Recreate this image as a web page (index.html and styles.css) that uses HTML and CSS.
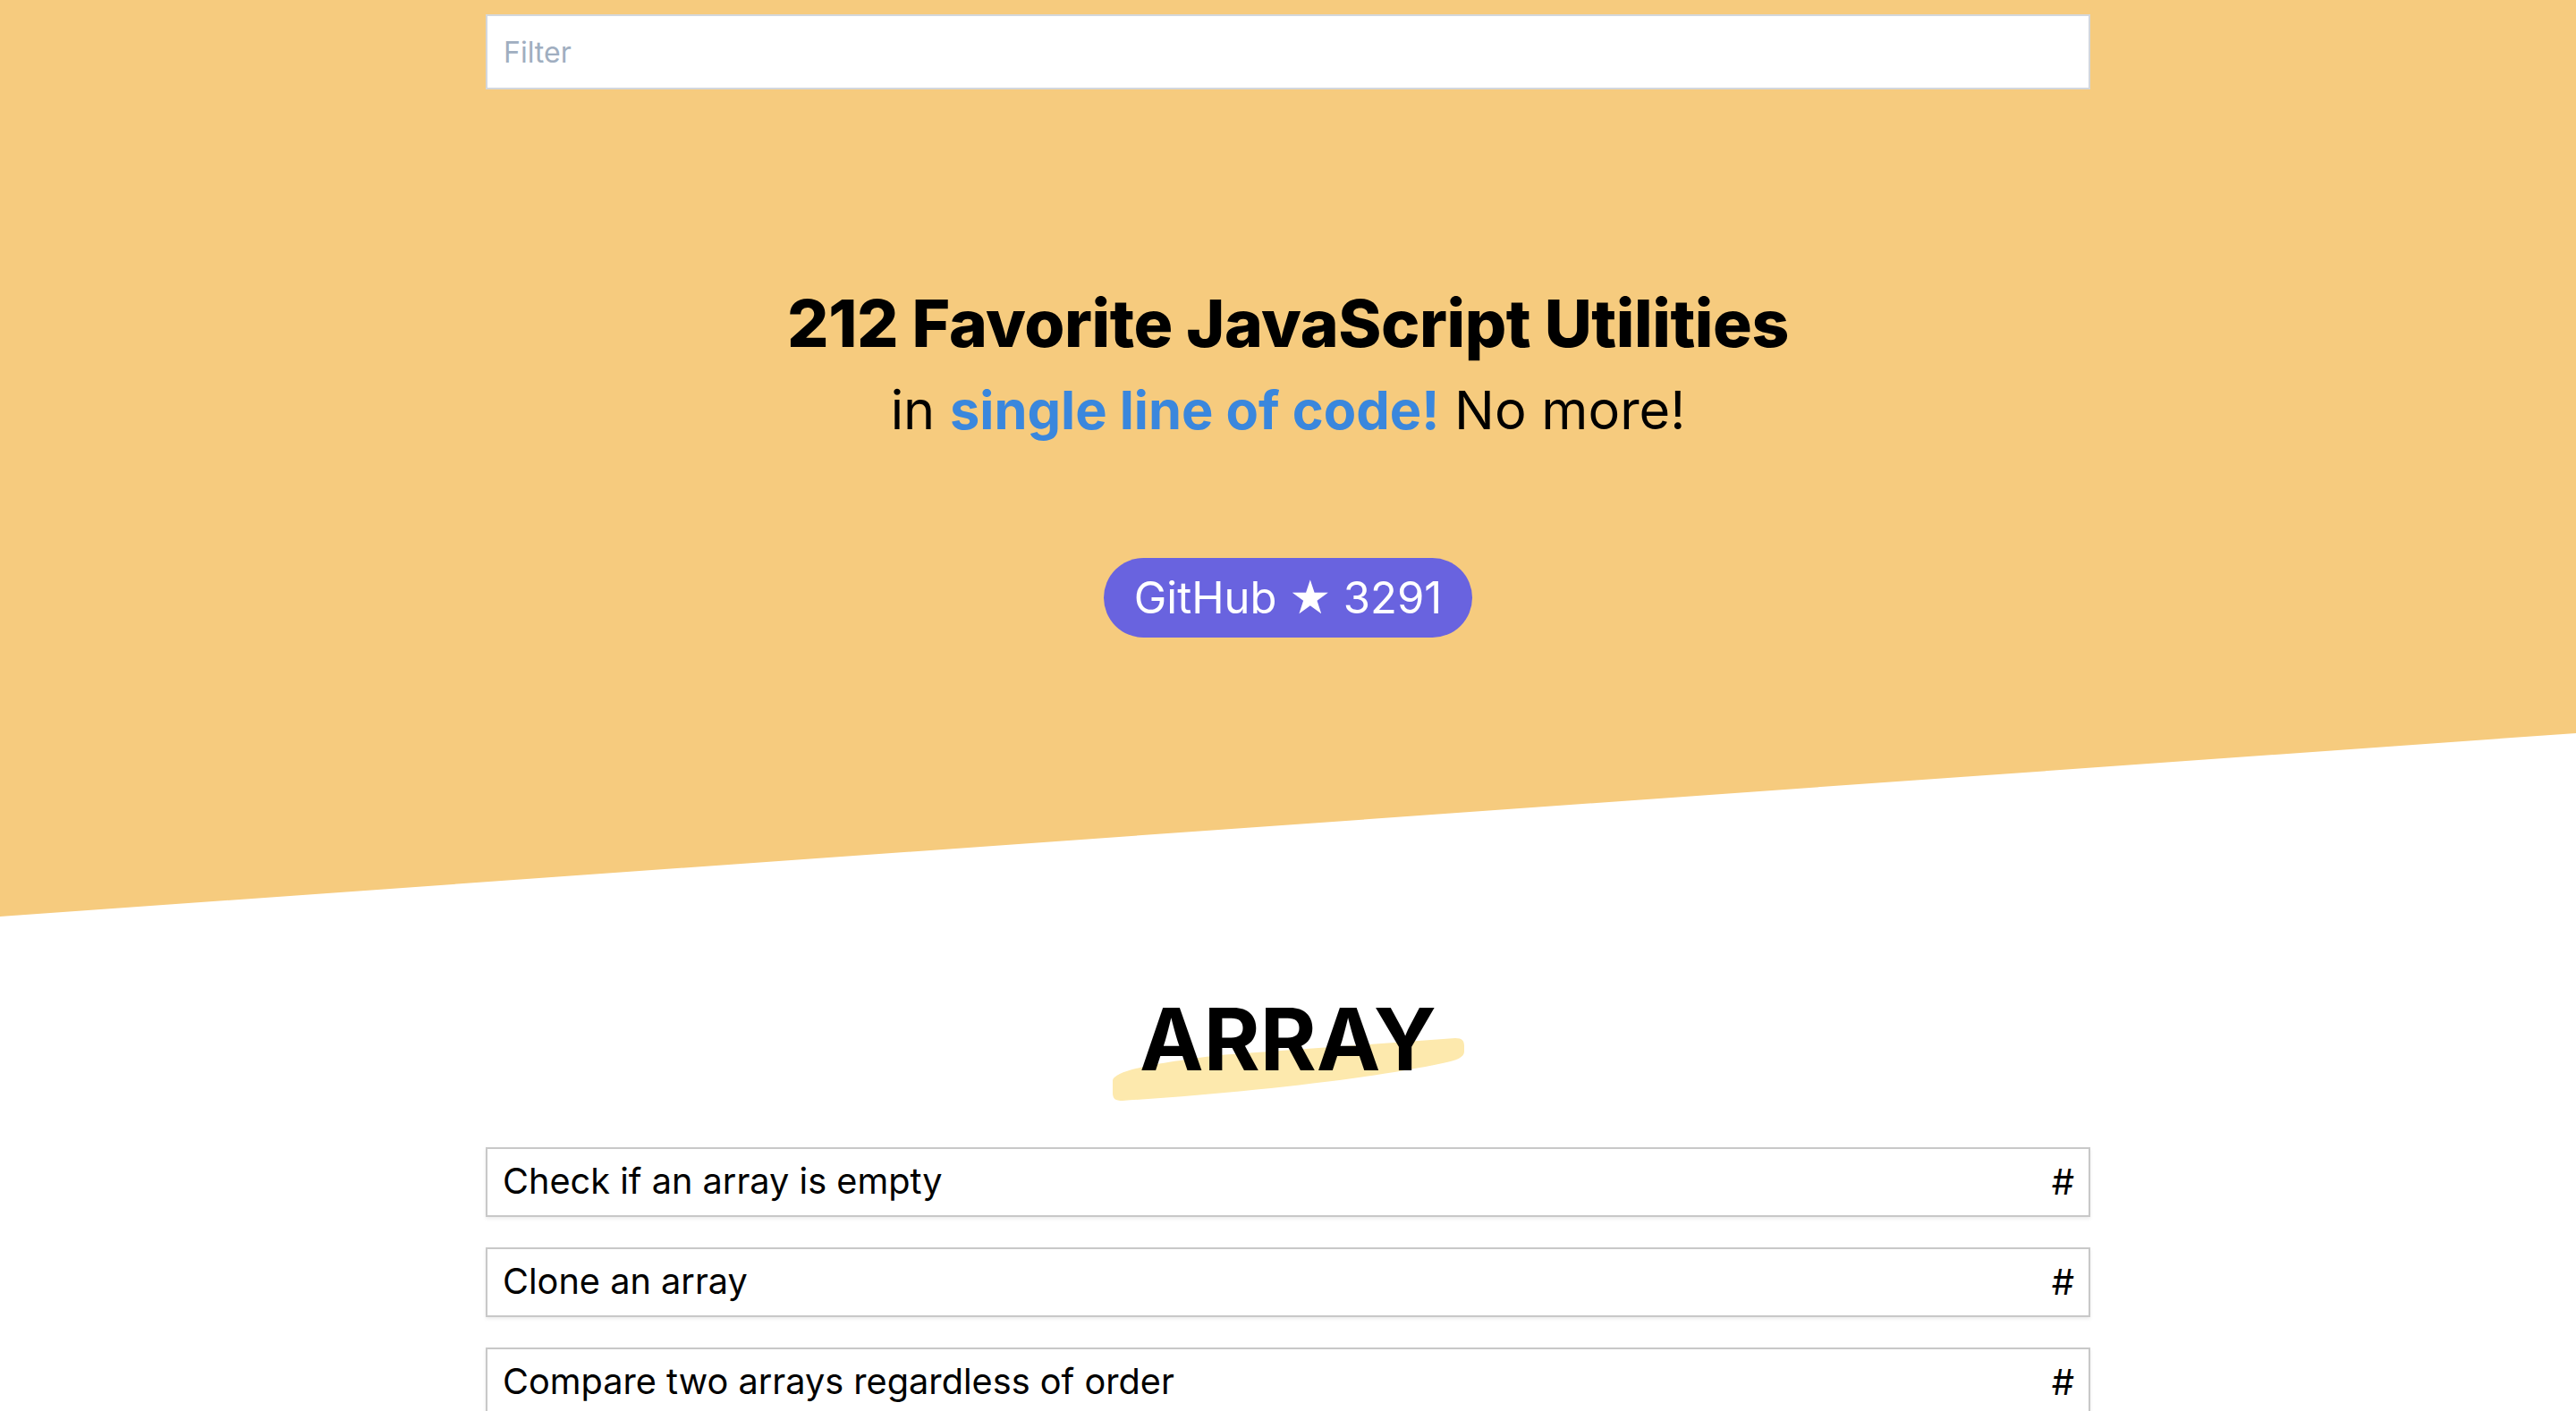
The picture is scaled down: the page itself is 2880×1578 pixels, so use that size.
FILE: index.html
```html
<!DOCTYPE html>
<html lang="en">
<head>
<meta charset="utf-8">
<title>1 LOC</title>
<link rel="stylesheet" href="styles.css">
</head>
<body>
<header class="hero">
  <div class="container">
    <input class="filter" type="text" placeholder="Filter">
  </div>
  <h1 class="hero-title">212 Favorite JavaScript Utilities</h1>
  <p class="hero-sub">in <strong class="accent">single line of code!</strong> No more!</p>
  <div class="hero-cta">
    <a class="github" href="#">GitHub <span class="star">★</span> 3291</a>
  </div>
</header>
<main class="content">
  <h2 class="section-title">
    <svg class="brush" viewBox="0 0 394 72" aria-hidden="true">
      <path d="M1,48 C4,38 40,30 120,20 L384,1 C392,1 394,4 394,10 L394,16 C394,22 386,26 370,29 C290,46 150,62 12,71 C4,71 1,69 1,62 Z" fill="#fde9ad"/>
    </svg>
    <span class="section-text">ARRAY</span>
  </h2>
  <ul class="items container">
    <li class="item"><span>Check if an array is empty</span><span class="hash">#</span></li>
    <li class="item"><span>Clone an array</span><span class="hash">#</span></li>
    <li class="item"><span>Compare two arrays regardless of order</span><span class="hash">#</span></li>
  </ul>
</main>
</body>
</html>
```
FILE: styles.css
```css
* { box-sizing: border-box; }
html, body { margin: 0; padding: 0; }
body {
  font-family: Inter, "Noto Sans", "DejaVu Sans", sans-serif;
  color: #000;
  background: #fff;
  overflow: hidden;
}
.container {
  width: 1794px;
  margin: 0 auto;
}
.hero {
  background: #f6cb7e;
  height: 1025px;
  padding-top: 16px;
  clip-path: polygon(0 0, 100% 0, 100% 80%, 0 100%);
}
.filter {
  display: block;
  width: 100%;
  height: 84px;
  border: 2px solid #d3d7dc;
  background: #fff;
  padding: 0 18px;
  font-family: Inter, "Noto Sans", sans-serif;
  font-size: 32px;
  color: #2d3748;
  outline: none;
  border-radius: 0;
}
.filter::placeholder { color: #a0aec0; }
.hero-title {
  margin: 225px 0 0;
  text-align: center;
  font-size: 73px;
  line-height: 1;
  font-weight: 800;
  letter-spacing: -0.45px;
}
.hero-sub {
  margin: 31px 0 0;
  text-align: center;
  font-size: 59.5px;
  line-height: 1;
  font-weight: 400;
}
.accent {
  color: #3a87dd;
  font-weight: 700;
}
.hero-cta {
  display: flex;
  justify-content: center;
  margin-top: 135px;
}
.github {
  display: inline-flex;
  align-items: center;
  height: 89px;
  padding: 0 34px;
  border-radius: 45px;
  background: #6963df;
  color: #fff;
  text-decoration: none;
  font-size: 49px;
  line-height: 1;
  white-space: pre;
}
.star {
  font-family: "DejaVu Sans", sans-serif;
  font-size: 52px;
  line-height: 1;
}
.content {
  padding-top: 89px;
}
.section-title {
  position: relative;
  width: 394px;
  margin: 0 auto;
  text-align: center;
  font-size: 96px;
  line-height: 1;
  font-weight: 700;
  letter-spacing: 0;
}
.brush {
  position: absolute;
  left: 0;
  top: 46px;
  width: 394px;
  height: 72px;
  z-index: 0;
}
.section-text {
  position: relative;
  z-index: 1;
}
.items {
  list-style: none;
  padding: 0;
  margin-top: 73px;
  display: flex;
  flex-direction: column;
  gap: 34px;
}
.item {
  display: flex;
  justify-content: space-between;
  align-items: center;
  height: 78px;
  border: 2px solid #c8c8c8;
  padding: 0 16px 0 17px;
  font-size: 39.7px;
  line-height: 1;
  box-shadow: 0 2px 4px rgba(0, 0, 0, 0.08);
  background: #fff;
}
.hash { font-size: 40px; }
```
